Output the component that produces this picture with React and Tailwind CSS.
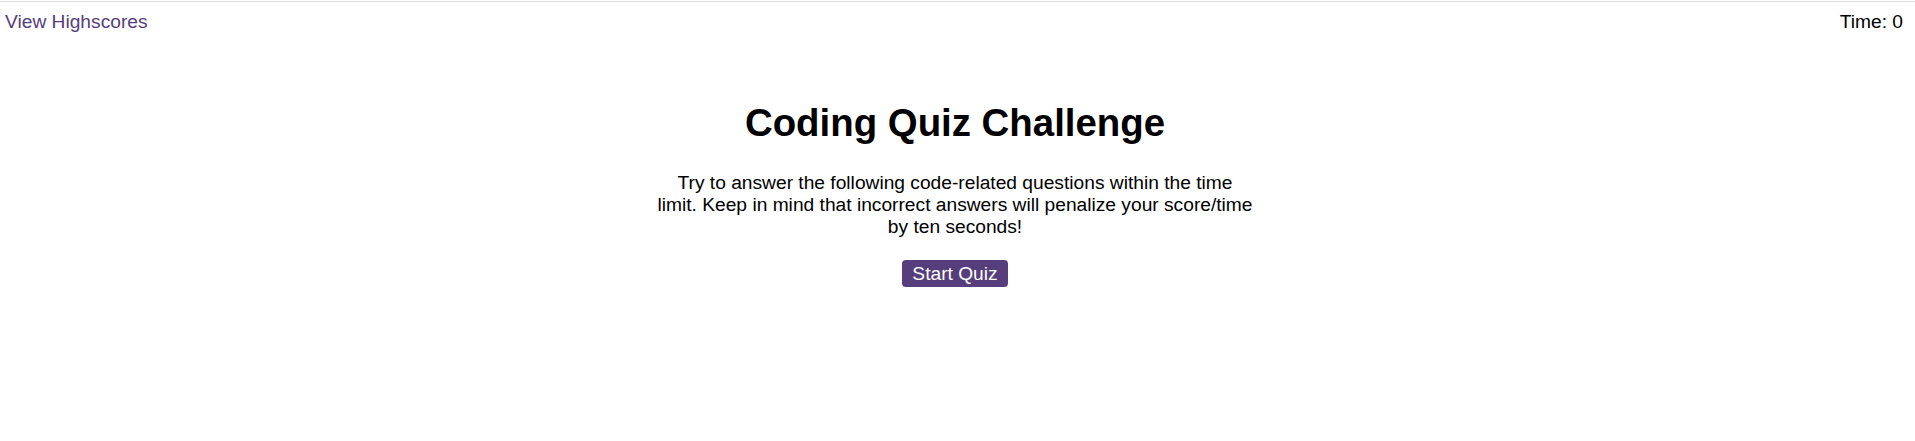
export default function App() {
  return (
    <div className="min-h-screen bg-white text-black font-['Liberation_Sans',Arial,sans-serif] text-[19.2px]">
      <div className="h-px mt-px bg-[#dddddd]"></div>
      <header className="flex justify-between items-start pl-[5px] pr-[12px] pt-[9px] leading-[22px]">
        <a href="#" className="text-[#563d7c]">View Highscores</a>
        <span>Time: 0</span>
      </header>
      <main className="flex flex-col items-center mt-[68px] pr-[5px]">
        <h1 className="text-[38.4px] font-bold leading-[44px]">Coding Quiz Challenge</h1>
        <p className="w-[640px] text-center mt-[27px] leading-[22px]">
          Try to answer the following code-related questions within the time
          <br />
          limit. Keep in mind that incorrect answers will penalize your score/time
          <br />
          by ten seconds!
        </p>
        <button className="mt-[22px] h-[27px] px-[10px] rounded-[4px] bg-[#563d7c] text-white leading-[22px]">
          Start Quiz
        </button>
      </main>
    </div>
  );
}
